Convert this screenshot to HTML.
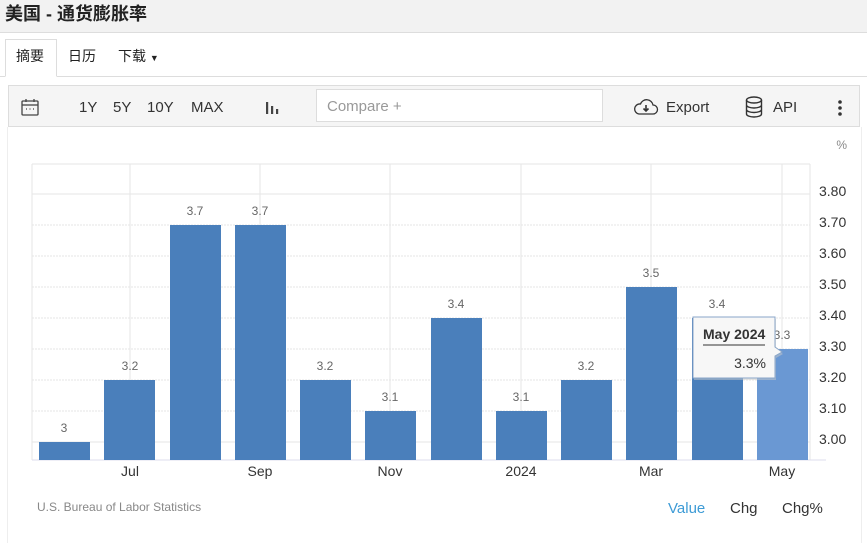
<!DOCTYPE html>
<html><head><meta charset="utf-8"><style>
body{margin:0;width:867px;height:543px;background:#fff;font-family:"Liberation Sans","Noto Sans CJK SC",sans-serif;position:relative;overflow:hidden}
.title{position:absolute;left:0;top:0;width:867px;height:33px;background:#f2f2f2;border-bottom:1px solid #ddd;font-weight:bold;font-size:18px;color:#222;line-height:29px;padding-left:5px;box-sizing:border-box}
.tabs{position:absolute;top:33px;left:0;width:867px;height:44px;border-bottom:1px solid #ddd;box-sizing:border-box}
.tab{position:absolute;top:13px;font-size:14px;color:#222}
.sel{position:absolute;left:5px;top:6px;width:52px;height:38px;border:1px solid #ddd;border-bottom:1px solid #fff;background:#fff;box-sizing:border-box}
.tb{position:absolute;left:8px;top:85px;width:852px;height:42px;background:#f5f5f5;border:1px solid #ddd;box-sizing:border-box;font-size:15px;color:#333}
.tb span{position:absolute;top:13px}
.cmp{position:absolute;left:307px;top:3px;width:287px;height:33px;background:#fff;border:1px solid #ddd;box-sizing:border-box;color:#999;font-size:15px;line-height:34px;padding-left:10px}
.panel{position:absolute;left:7px;top:127px;width:855px;height:416px;border-left:1px solid #eee;border-right:1px solid #eee;box-sizing:border-box}
</style></head><body>
<div class="title">美国 - 通货膨胀率</div>
<div class="tabs"><div class="sel"></div>
<span class="tab" style="left:16px">摘要</span><span class="tab" style="left:68px">日历</span><span class="tab" style="left:118px">下载 <span style="font-size:9px">▼</span></span></div>
<div class="tb">
<svg style="position:absolute;left:12px;top:12px" width="18" height="18" viewBox="0 0 18 18" fill="none" stroke="#444" stroke-width="1.3"><rect x="1" y="3" width="16" height="14" rx="1"/><line x1="1" y1="7" x2="17" y2="7"/><line x1="5" y1="1" x2="5" y2="4"/><line x1="13" y1="1" x2="13" y2="4"/><line x1="5" y1="11" x2="6" y2="11"/><line x1="8.5" y1="11" x2="9.5" y2="11"/><line x1="12" y1="11" x2="13" y2="11"/></svg>
<span style="left:70px">1Y</span><span style="left:104px">5Y</span><span style="left:138px">10Y</span><span style="left:182px">MAX</span>
<svg style="position:absolute;left:256px;top:13px" width="16" height="16" fill="#444"><rect x="1" y="3" width="2.2" height="12"/><rect x="6" y="7" width="2.2" height="8"/><rect x="11" y="10" width="2.2" height="5"/></svg>
<div class="cmp">Compare +</div>
<svg style="position:absolute;left:624px;top:11px" width="26" height="20" viewBox="0 0 26 20" fill="none" stroke="#333" stroke-width="1.3"><path d="M6 17h14a4.5 4.5 0 0 0 0-9 6.5 6.5 0 0 0-12.5-1A5 5 0 0 0 6 17z"/><path d="M13 8v6M10.5 11.5l2.5 2.5 2.5-2.5" stroke-width="1.6"/></svg>
<span style="left:657px">Export</span>
<svg style="position:absolute;left:736px;top:10px" width="18" height="22" viewBox="0 0 18 22" fill="none" stroke="#333" stroke-width="1.4"><ellipse cx="9" cy="4" rx="7.5" ry="3"/><path d="M1.5 4v14c0 1.7 3.4 3 7.5 3s7.5-1.3 7.5-3V4M1.5 9c0 1.7 3.4 3 7.5 3s7.5-1.3 7.5-3M1.5 13.5c0 1.7 3.4 3 7.5 3s7.5-1.3 7.5-3"/></svg>
<span style="left:764px">API</span>
<svg style="position:absolute;left:828px;top:13px" width="6" height="18" fill="#333"><circle cx="3" cy="3" r="1.8"/><circle cx="3" cy="9" r="1.8"/><circle cx="3" cy="15" r="1.8"/></svg>
</div>
<div class="panel"></div>
<svg style="position:absolute;left:0;top:0" width="867" height="543" font-family="Liberation Sans, sans-serif">
<text x="847" y="149" font-size="12" fill="#888" text-anchor="end">%</text>
<g stroke="#e6e6e6" stroke-width="1">
<line x1="32" y1="164" x2="810" y2="164"/>
<line x1="32" y1="194" x2="810" y2="194"/><line x1="32" y1="225" x2="810" y2="225" stroke-dasharray="2,1"/><line x1="32" y1="256" x2="810" y2="256" stroke-dasharray="2,1"/><line x1="32" y1="287" x2="810" y2="287" stroke-dasharray="2,1"/><line x1="32" y1="318" x2="810" y2="318" stroke-dasharray="2,1"/><line x1="32" y1="349" x2="810" y2="349" stroke-dasharray="2,1"/><line x1="32" y1="380" x2="810" y2="380" stroke-dasharray="2,1"/><line x1="32" y1="411" x2="810" y2="411" stroke-dasharray="2,1"/><line x1="32" y1="442" x2="810" y2="442"/>
<line x1="32" y1="164" x2="32" y2="460"/><line x1="130" y1="164" x2="130" y2="460"/><line x1="260" y1="164" x2="260" y2="460"/><line x1="390" y1="164" x2="390" y2="460"/><line x1="521" y1="164" x2="521" y2="460"/><line x1="651" y1="164" x2="651" y2="460"/><line x1="782" y1="164" x2="782" y2="460"/><line x1="810" y1="164" x2="810" y2="460"/>
<line x1="32" y1="460" x2="826" y2="460" stroke="#dde"/>
</g>
<g fill="#4a7fbb">
<rect x="39" y="442" width="51" height="18"/><rect x="104" y="380" width="51" height="80"/><rect x="170" y="225" width="51" height="235"/><rect x="235" y="225" width="51" height="235"/><rect x="300" y="380" width="51" height="80"/><rect x="365" y="411" width="51" height="49"/><rect x="431" y="318" width="51" height="142"/><rect x="496" y="411" width="51" height="49"/><rect x="561" y="380" width="51" height="80"/><rect x="626" y="287" width="51" height="173"/><rect x="692" y="318" width="51" height="142"/><rect x="757" y="349" width="51" height="111" fill="#6a98d3"/>
</g>
<g font-size="12" fill="#666" text-anchor="middle">
<text x="64" y="432">3</text><text x="130" y="370">3.2</text><text x="195" y="215">3.7</text><text x="260" y="215">3.7</text><text x="325" y="370">3.2</text><text x="390" y="401">3.1</text><text x="456" y="308">3.4</text><text x="521" y="401">3.1</text><text x="586" y="370">3.2</text><text x="651" y="277">3.5</text><text x="717" y="308">3.4</text><text x="782" y="339">3.3</text>
</g>
<g font-size="14" fill="#333" text-anchor="middle">
<text x="130" y="476">Jul</text><text x="260" y="476">Sep</text><text x="390" y="476">Nov</text><text x="521" y="476">2024</text><text x="651" y="476">Mar</text><text x="782" y="476">May</text>
</g>
<g font-size="14" fill="#333">
<text x="819" y="196">3.80</text><text x="819" y="227">3.70</text><text x="819" y="258">3.60</text><text x="819" y="289">3.50</text><text x="819" y="320">3.40</text><text x="819" y="351">3.30</text><text x="819" y="382">3.20</text><text x="819" y="413">3.10</text><text x="819" y="444">3.00</text>
</g>
<text x="37" y="511" font-size="12" fill="#888">U.S. Bureau of Labor Statistics</text>
<text x="668" y="513" font-size="15" fill="#3d9bd6">Value</text><text x="730" y="513" font-size="15" fill="#333">Chg</text><text x="782" y="513" font-size="15" fill="#333">Chg%</text>
<path d="M694 319h82v30l7 5-7 4v22h-82z" fill="#ccc" opacity="0.5"/>
<path d="M693 317h82v30l7 5-7 4v22h-82z" fill="#f7f7f7" stroke="#8aa6c8" stroke-width="1"/>
<text x="703" y="339" font-size="14" font-weight="bold" fill="#333">May 2024</text>
<line x1="703" y1="345" x2="765" y2="345" stroke="#333"/>
<text x="766" y="368" font-size="14" fill="#333" text-anchor="end">3.3%</text>
</svg>
</body></html>
